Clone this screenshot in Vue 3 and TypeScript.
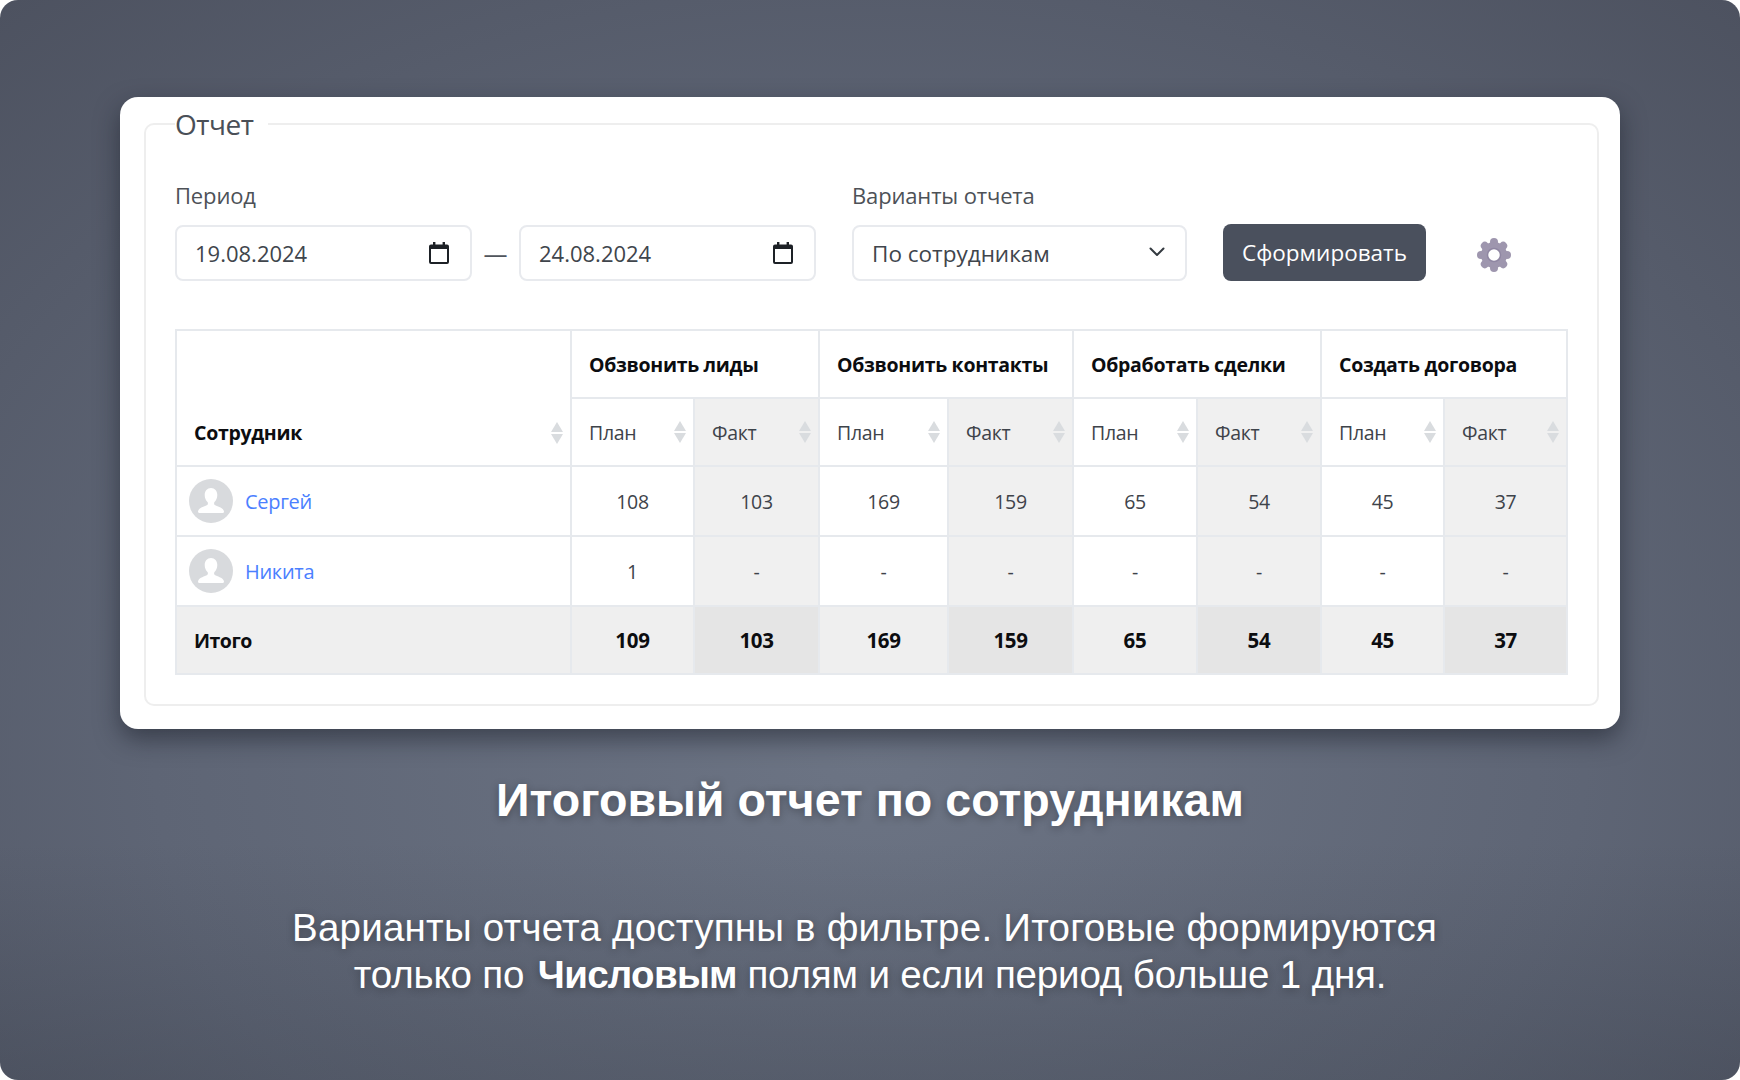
<script setup lang="ts">
interface Row { name: string; values: string[] }
const groups: string[] = ['Обзвонить лиды', 'Обзвонить контакты', 'Обработать сделки', 'Создать договора']
const widths: number[] = [395, 123, 125, 129, 125, 124, 124, 123, 123]
const rows: Row[] = [
  { name: 'Сергей', values: ['108', '103', '169', '159', '65', '54', '45', '37'] },
  { name: 'Никита', values: ['1', '-', '-', '-', '-', '-', '-', '-'] },
]
const totals: string[] = ['109', '103', '169', '159', '65', '54', '45', '37']
const subHeads: string[] = ['План', 'Факт', 'План', 'Факт', 'План', 'Факт', 'План', 'Факт']
const dates: string[] = ['19.08.2024', '24.08.2024']
</script>

<template>
  <div class="page">
    <section class="card">
      <fieldset class="box">
        <legend class="legend">Отчет</legend>
        <div class="filters">
          <div class="period">
            <div class="label">Период</div>
            <div class="dates">
              <template v-for="(d, i) in dates" :key="d">
                <span v-if="i === 1" class="dash">—</span>
                <div class="control date">
                  <span>{{ d }}</span>
                  <svg class="cal" viewBox="0 0 20 22" width="20" height="22">
                    <path fill="#1d2126" d="M4 0h2.4v2.5h7.2V0H16v2.5h2a2 2 0 0 1 2 2V20a2 2 0 0 1-2 2H2a2 2 0 0 1-2-2V4.500a2 2 0 0 1 2-2h2z" />
                    <rect x="2" y="7" width="16" height="13" fill="#fff" />
                  </svg>
                </div>
              </template>
            </div>
          </div>
          <div class="variant">
            <div class="label">Варианты отчета</div>
            <div class="control select">
              <span>По сотрудникам</span>
              <svg viewBox="0 0 16 10" width="16" height="10" class="chev">
                <path d="M1.500 1.500 8 8l6.500-6.500" fill="none" stroke="#343a40" stroke-width="2" stroke-linecap="round" stroke-linejoin="round" />
              </svg>
            </div>
          </div>
          <button class="submit" type="button">Сформировать</button>
          <svg class="gear" viewBox="0 0 36 36" width="36" height="36">
            <g fill="#9e96ae">
              <circle v-for="a in [0, 45, 90, 135, 180, 225, 270, 315]" :key="a" cx="18" cy="5" r="4" :transform="`rotate(${a} 18 18)`" />
              <circle cx="18" cy="18" r="13" />
            </g>
            <circle cx="18" cy="18" r="6.500" fill="#fff" stroke="#8f86a2" stroke-width="1.500" />
          </svg>
        </div>
        <table class="report">
          <colgroup>
            <col v-for="(w, i) in widths" :key="i" :style="{ width: w + 'px' }" />
          </colgroup>
          <thead>
            <tr class="row-group">
              <th rowspan="2" class="emp-head">
                <div class="head-in"><span>Сотрудник</span><i class="sort"><b class="up"></b><b class="down"></b></i></div>
              </th>
              <th v-for="g in groups" :key="g" colspan="2" class="group">{{ g }}</th>
            </tr>
            <tr class="row-sub">
              <th v-for="(s, i) in subHeads" :key="i" class="sub" :class="{ fact: i % 2 === 1 }">
                <div class="head-in"><span>{{ s }}</span><i class="sort"><b class="up"></b><b class="down"></b></i></div>
              </th>
            </tr>
          </thead>
          <tbody>
            <tr v-for="r in rows" :key="r.name" class="row-body">
              <td class="emp">
                <div class="person">
                  <svg class="avatar" viewBox="0 0 44 44" width="44" height="44">
                    <circle cx="22" cy="22" r="22" fill="#d8dadd" />
                    <path fill="#fff" d="M22 9c3.800 0 6.300 3 6.300 7 0 3-1.200 5.600-2.800 7.100-.6.600-.6 2.400.3 3 2.400 1.400 7.700 2.600 8.900 5.400.6 1.500.3 2.500-1 2.500H10.300c-1.300 0-1.600-1-1-2.500 1.200-2.800 6.500-4 8.900-5.400.9-.6.900-2.400.3-3-1.600-1.500-2.800-4.100-2.800-7.100 0-4 2.500-7 6.300-7z" />
                  </svg>
                  <a class="link">{{ r.name }}</a>
                </div>
              </td>
              <td v-for="(v, i) in r.values" :key="i" class="num" :class="{ fact: i % 2 === 1 }">{{ v }}</td>
            </tr>
            <tr class="row-total">
              <td class="total-name">Итого</td>
              <td v-for="(v, i) in totals" :key="i" class="num" :class="{ fact: i % 2 === 1 }">{{ v }}</td>
            </tr>
          </tbody>
        </table>
      </fieldset>
    </section>
    <h1 class="title">Итоговый отчет по сотрудникам</h1>
    <p class="desc"><span class="line-a">Варианты отчета доступны в фильтре. Итоговые формируются</span><br /><span class="line-b">только по <strong>Числовым</strong> полям и если период больше 1 дня.</span></p>
  </div>
</template>

<style>
html, body { margin: 0; background: #fff; }
</style>

<style scoped>
.page {
  width: 1740px;
  height: 1080px;
  box-sizing: border-box;
  padding: 97px 120px 0;
  overflow: hidden;
  border-radius: 18px;
  background:
    linear-gradient(to bottom, rgba(50, 55, 66, 0) 78%, rgba(50, 55, 66, 0.28) 100%),
    radial-gradient(ellipse 1300px 1000px at 870px 750px, #6c7484 0%, #5e6575 55%, #4d5260 100%);
  font-family: "Open Sans", "Noto Sans", sans-serif;
}
.card {
  width: 1500px;
  height: 632px;
  box-sizing: border-box;
  padding: 13px 21px 0 24px;
  background: #fff;
  border-radius: 18px;
  box-shadow: 0 10px 24px rgba(20, 24, 34, 0.5);
}
.box {
  margin: 0;
  height: 596px;
  box-sizing: border-box;
  padding: 0 29px;
  border: 2px solid #eeeeee;
  border-radius: 10px;
  min-width: 0;
}
.legend {
  margin-left: 0;
  padding: 0 15px 0 0;
  margin-top: -2px;
  font-size: 28px;
  line-height: 28px;
  color: #4a4f57;
  letter-spacing: -0.5px;
}
.filters {
  display: flex;
  align-items: flex-end;
  margin-top: 43px;
}
.label {
  font-size: 22px;
  line-height: 29px;
  color: #4d5157;
  margin-bottom: 15px;
  letter-spacing: -0.15px;
}
.dates { display: flex; align-items: center; }
.dash { width: 47px; text-align: center; font-size: 24px; color: #50555c; }
.control {
  height: 56px;
  box-sizing: border-box;
  border: 2px solid #e8eaee;
  border-radius: 8px;
  display: flex;
  align-items: center;
  justify-content: space-between;
  font-size: 22.5px;
  color: #40454c;
}
.date { width: 297px; padding: 0 21px 0 18px; font-size: 22px; }
.variant { margin-left: 36px; }
.select { width: 335px; padding: 0 20px 0 18px; }
.chev { margin-top: -3px; }
.submit {
  margin-left: 36px;
  width: 203px;
  height: 57px;
  border: none;
  border-radius: 8px;
  background: #4a505d;
  color: #fff;
  font: inherit;
  font-size: 22.5px;
}
.gear { margin: 0 0 8px 50px; }
.report {
  margin-top: 48px;
  width: 1391px;
  table-layout: fixed;
  border-collapse: collapse;
  font-size: 19.5px;
  color: #3e434a;
  letter-spacing: -0.3px;
}
.report th, .report td { border: 2px solid #e6e9ed; padding: 0 17px; }
.row-group { height: 68px; }
.row-sub { height: 68px; }
.row-body { height: 70px; }
.row-total { height: 68px; background: #efefef; }
.group, .emp-head, .total-name { color: #0c0d10; font-weight: 700; text-align: left; letter-spacing: -0.3px; }
.report td.total-name { font-size: 19.5px; letter-spacing: -0.5px; }
.emp-head { vertical-align: bottom; padding-bottom: 19px !important; }
.sub { font-weight: 400; text-align: left; padding-right: 7px !important; }
.emp-head .head-in { margin-right: -10px; }
.head-in { display: flex; align-items: center; justify-content: space-between; }
.sort { display: flex; flex-direction: column; gap: 2px; }
.sort b { display: block; width: 0; height: 0; border-left: 6.500px solid transparent; border-right: 6.500px solid transparent; }
.up { border-bottom: 10px solid #d9dcdf; }
.down { border-top: 10px solid #d9dcdf; }
.fact { background: #f0f0f0; }
.row-total .fact { background: #e5e5e5; }
.num { text-align: center; }
.row-total td { font-weight: 700; color: #0c0d10; font-size: 20.5px; }
.report td.emp { padding: 0 0 0 12px; }
.person { display: flex; align-items: center; gap: 12px; }
.link { color: #4b7fff; font-size: 20px; }
.title {
  margin: 44px 0 0 -120px;
  width: 1740px;
  text-align: center;
  font-family: "Liberation Sans", Arial, sans-serif;
  font-size: 46.6px;
  line-height: 54px;
  font-weight: 700;
  color: #fff;
  text-shadow: 0 2px 8px rgba(0, 0, 0, 0.3);
}
.desc {
  margin: 78px 0 0 -120px;
  width: 1740px;
  text-align: center;
  font-family: "Liberation Sans", Arial, sans-serif;
  font-size: 38.5px;
  line-height: 46.5px;
  color: #fff;
  text-shadow: 0 2px 8px rgba(0, 0, 0, 0.3);
}
.line-a { letter-spacing: 0.23px; margin-right: 11px; }
.line-b { letter-spacing: -0.15px; }
.line-b strong { letter-spacing: -0.7px; margin-left: 3px; }
</style>
